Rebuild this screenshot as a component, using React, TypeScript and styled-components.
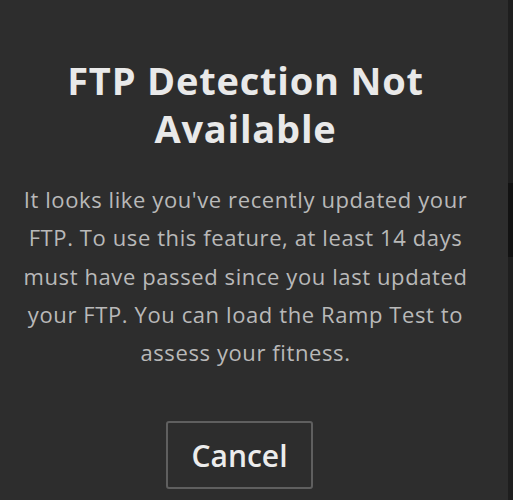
import React from 'react';
import styled, { createGlobalStyle } from 'styled-components';

const GlobalStyle = createGlobalStyle`
  html, body {
    margin: 0;
    padding: 0;
    background: #1e1e1e;
  }
`;

const Screen = styled.div`
  display: flex;
  width: 513px;
  height: 500px;
  overflow: hidden;
`;

const Modal = styled.div`
  width: 508px;
  flex-shrink: 0;
  background: #2d2d2d;
  display: flex;
  flex-direction: column;
  align-items: center;
  padding: 56px 17px 0 0;
  box-sizing: border-box;
  font-family: 'Open Sans', Lato, sans-serif;
`;

const Title = styled.h1`
  margin: 0;
  color: #e9e9e9;
  font-size: 38px;
  line-height: 48px;
  font-weight: 700;
  letter-spacing: 0.8px;
  text-align: center;
  width: 440px;
`;

const Message = styled.p`
  margin: 28px 0 0;
  color: #b9b9b9;
  font-size: 22px;
  line-height: 38.3px;
  font-weight: 400;
  letter-spacing: 0.6px;
  text-align: center;
  white-space: nowrap;
`;

const CancelButton = styled.button`
  margin: 50px 12px 0 0;
  width: 147px;
  height: 68px;
  background: transparent;
  border: 2px solid #5f5f5f;
  border-radius: 3px;
  color: #ececec;
  font-family: inherit;
  font-size: 30px;
  font-weight: 600;
  cursor: pointer;
`;

const SideStrip = styled.div`
  flex: 1;
  background: #1e1e1e;
  display: flex;
  flex-direction: column;
  padding-top: 183px;
`;

const StripBlock = styled.div`
  height: 74px;
  background: #121212;
`;

export default function App() {
  return (
    <>
      <GlobalStyle />
      <Screen>
        <Modal>
          <Title>FTP Detection Not Available</Title>
          <Message>
            It looks like you've recently updated your
            <br />
            FTP. To use this feature, at least 14 days
            <br />
            must have passed since you last updated
            <br />
            your FTP. You can load the Ramp Test to
            <br />
            assess your fitness.
          </Message>
          <CancelButton>Cancel</CancelButton>
        </Modal>
        <SideStrip>
          <StripBlock />
        </SideStrip>
      </Screen>
    </>
  );
}
